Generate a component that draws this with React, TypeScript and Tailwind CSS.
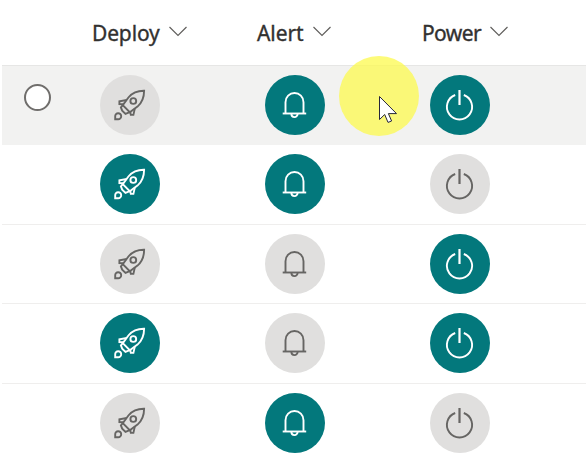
type IconName = "rocket" | "bell" | "power";

function Glyph({ name }: { name: IconName }) {
  return (
    <svg viewBox="0 0 60 60" className="size-[60px]" fill="none" stroke="currentColor" strokeWidth="1.9">
      {name === "rocket" && (
        <>
          <path d="M44.1 15.8C37.5 15.7 32 18.3 28.4 22.5L22.8 30.2L29.8 37.2L37.5 31.6C41.7 28 44.1 22.8 44.1 15.8Z" />
          <circle cx="33.3" cy="26" r="2.9" />
          <path d="M26.8 25L19.4 26.4V29L23.6 29.2M34.8 33.6L33.4 39.9H30.8L30.2 36.8" />
          <path d="M22.8 30.2L20.9 32.4L22.2 35.6L25.5 38.9L29.8 37.2" />
          <path d="M15.2 44.2V41.3A3 3 0 1 1 18.2 44.2Z" />
        </>
      )}
      {name === "bell" && (
        <>
          <path d="M20.5 38.5V27.2A9 9.2 0 0 1 38.5 27.2V38.5" />
          <path d="M17.7 38.5H41.2" />
          <path d="M26.4 39A3.1 3.1 0 0 0 32.6 39" />
        </>
      )}
      {name === "power" && (
        <>
          <path d="M25.2 20A12.6 12.6 0 1 0 33.8 20" />
          <path d="M29.5 15V30" strokeWidth="2.2" />
        </>
      )}
    </svg>
  );
}

function StatusCell({ name, active }: { name: IconName; active: boolean }) {
  return (
    <div className="pt-[9px]">
      <div className={active ? "size-[60px] rounded-full bg-[#03787c] text-white" : "size-[60px] rounded-full bg-[#e0dfde] text-[#666563]"}>
        <Glyph name={name} />
      </div>
    </div>
  );
}

function Header({ label, width }: { label: string; width: string }) {
  return (
    <div className="flex items-center">
      <span className={"text-[21px] leading-7 font-normal whitespace-nowrap [-webkit-text-stroke:0.35px_#323130] " + width}>{label}</span>
      <svg width="18" height="11" viewBox="0 0 18 11" className="mb-[2px] shrink-0" fill="none" stroke="#605e5c" strokeWidth="1.15">
        <path d="M.5 1L9 9.5L17.5 1" />
      </svg>
    </div>
  );
}

const rows = [
  { deploy: false, alert: true, power: true, style: "h-[79px] bg-[#f2f2f1]" },
  { deploy: true, alert: true, power: false, style: "h-20 border-b border-[#efeeed]" },
  { deploy: false, alert: false, power: true, style: "h-[79px] border-b border-[#efeeed]" },
  { deploy: true, alert: false, power: true, style: "h-20 border-b border-[#efeeed]" },
  { deploy: false, alert: true, power: false, style: "h-[76px]" },
];

export default function App() {
  return (
    <main className="relative h-[460px] w-[586px] overflow-hidden bg-white pl-0.5 font-['Noto_Sans',sans-serif] text-[#323130]">
      <div className="grid h-[66px] grid-cols-[90px_165px_165px_164px] border-b border-[#e6e6e5]">
        <div />
        <Header label="Deploy" width="w-[77px] tracking-[-0.15px]" />
        <Header label="Alert" width="w-14 tracking-[-0.1px]" />
        <Header label="Power" width="w-[68px] tracking-[-0.6px]" />
      </div>
      {rows.map((row, i) => (
        <div key={i} className={"grid grid-cols-[98px_165px_165px_156px] " + row.style}>
          <div className="pt-[18px] pl-[22px]">
            {i === 0 && <div className="size-[27px] rounded-full border-2 border-[#706e6c] bg-white" />}
          </div>
          <StatusCell name="rocket" active={row.deploy} />
          <StatusCell name="bell" active={row.alert} />
          <StatusCell name="power" active={row.power} />
        </div>
      ))}
      <div className="absolute top-14 left-[339px] size-20 rounded-full bg-[#fcfa4e]/75" />
      <svg className="absolute top-[95px] left-[378px]" width="22" height="30" viewBox="0 0 22 30">
        <path d="M1.5 1.5V24.5L6.7 19.5L10 27.4L13.6 26L10.4 18.6H18.5Z" fill="white" stroke="#26263a" strokeWidth="1" />
      </svg>
    </main>
  );
}
